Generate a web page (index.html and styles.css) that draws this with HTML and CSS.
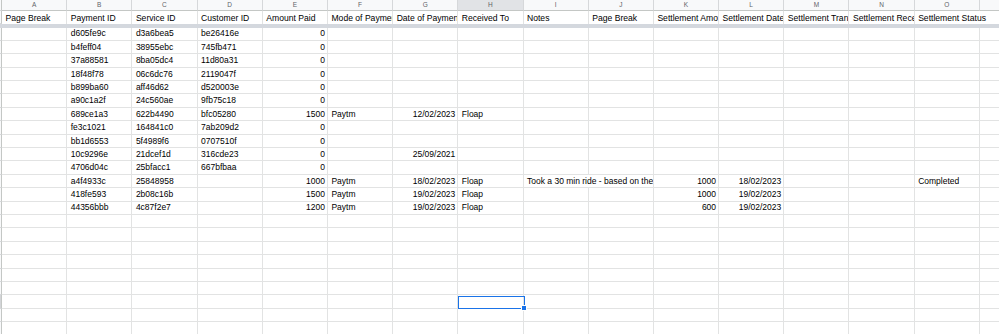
FILE: index.html
```html
<!DOCTYPE html>
<html>
<head>
<meta charset="utf-8">
<link rel="stylesheet" href="styles.css">
</head>
<body>
<div class="sheet">
  <div class="row letters">
    <div class="rh"></div><div>A</div><div>B</div><div>C</div><div>D</div><div>E</div><div>F</div><div>G</div><div class="sel">H</div><div>I</div><div>J</div><div>K</div><div>L</div><div>M</div><div>N</div><div>O</div><div></div>
  </div>
  <div class="row head">
    <div class="rh"></div><div>Page Break</div><div>Payment ID</div><div>Service ID</div><div>Customer ID</div><div>Amount Paid</div><div>Mode of Payment</div><div>Date of Payment</div><div>Received To</div><div>Notes</div><div>Page Break</div><div>Settlement Amount</div><div>Settlement Date</div><div>Settlement Transaction</div><div>Settlement Receipt</div><div class="span">Settlement Status</div>
  </div>
  <div class="freeze"></div>

  <div class="row"><div class="rh"></div><div></div><div>d605fe9c</div><div>d3a6bea5</div><div>be26416e</div><div class="r">0</div><div></div><div></div><div></div><div></div><div></div><div></div><div></div><div></div><div></div><div></div><div></div></div>
  <div class="row"><div class="rh"></div><div></div><div>b4feff04</div><div>38955ebc</div><div>745fb471</div><div class="r">0</div><div></div><div></div><div></div><div></div><div></div><div></div><div></div><div></div><div></div><div></div><div></div></div>
  <div class="row"><div class="rh"></div><div></div><div>37a88581</div><div>8ba05dc4</div><div>11d80a31</div><div class="r">0</div><div></div><div></div><div></div><div></div><div></div><div></div><div></div><div></div><div></div><div></div><div></div></div>
  <div class="row"><div class="rh"></div><div></div><div>18f48f78</div><div>06c6dc76</div><div>2119047f</div><div class="r">0</div><div></div><div></div><div></div><div></div><div></div><div></div><div></div><div></div><div></div><div></div><div></div></div>
  <div class="row"><div class="rh"></div><div></div><div>b899ba60</div><div>aff46d62</div><div>d520003e</div><div class="r">0</div><div></div><div></div><div></div><div></div><div></div><div></div><div></div><div></div><div></div><div></div><div></div></div>
  <div class="row"><div class="rh"></div><div></div><div>a90c1a2f</div><div>24c560ae</div><div>9fb75c18</div><div class="r">0</div><div></div><div></div><div></div><div></div><div></div><div></div><div></div><div></div><div></div><div></div><div></div></div>
  <div class="row"><div class="rh"></div><div></div><div>689ce1a3</div><div>622b4490</div><div>bfc05280</div><div class="r">1500</div><div>Paytm</div><div class="r">12/02/2023</div><div>Floap</div><div></div><div></div><div></div><div></div><div></div><div></div><div></div><div></div></div>
  <div class="row"><div class="rh"></div><div></div><div>fe3c1021</div><div>164841c0</div><div>7ab209d2</div><div class="r">0</div><div></div><div></div><div></div><div></div><div></div><div></div><div></div><div></div><div></div><div></div><div></div></div>
  <div class="row"><div class="rh"></div><div></div><div>bb1d6553</div><div>5f4989f6</div><div>0707510f</div><div class="r">0</div><div></div><div></div><div></div><div></div><div></div><div></div><div></div><div></div><div></div><div></div><div></div></div>
  <div class="row"><div class="rh"></div><div></div><div>10c9296e</div><div>21dcef1d</div><div>316cde23</div><div class="r">0</div><div></div><div class="r">25/09/2021</div><div></div><div></div><div></div><div></div><div></div><div></div><div></div><div></div><div></div></div>
  <div class="row"><div class="rh"></div><div></div><div>4706d04c</div><div>25bfacc1</div><div>667bfbaa</div><div class="r">0</div><div></div><div></div><div></div><div></div><div></div><div></div><div></div><div></div><div></div><div></div><div></div></div>
  <div class="row"><div class="rh"></div><div></div><div>a4f4933c</div><div>25848958</div><div></div><div class="r">1000</div><div>Paytm</div><div class="r">18/02/2023</div><div>Floap</div><div class="span">Took a 30 min ride - based on the distance</div><div class="r">1000</div><div class="r">18/02/2023</div><div></div><div></div><div>Completed</div><div></div></div>
  <div class="row"><div class="rh"></div><div></div><div>418fe593</div><div>2b08c16b</div><div></div><div class="r">1500</div><div>Paytm</div><div class="r">19/02/2023</div><div>Floap</div><div></div><div></div><div class="r">1000</div><div class="r">19/02/2023</div><div></div><div></div><div></div><div></div></div>
  <div class="row"><div class="rh"></div><div></div><div>44356bbb</div><div>4c87f2e7</div><div></div><div class="r">1200</div><div>Paytm</div><div class="r">19/02/2023</div><div>Floap</div><div></div><div></div><div class="r">600</div><div class="r">19/02/2023</div><div></div><div></div><div></div><div></div></div>
  <div class="row"><div class="rh"></div><div></div><div></div><div></div><div></div><div></div><div></div><div></div><div></div><div></div><div></div><div></div><div></div><div></div><div></div><div></div><div></div></div>
  <div class="row"><div class="rh"></div><div></div><div></div><div></div><div></div><div></div><div></div><div></div><div></div><div></div><div></div><div></div><div></div><div></div><div></div><div></div><div></div></div>
  <div class="row"><div class="rh"></div><div></div><div></div><div></div><div></div><div></div><div></div><div></div><div></div><div></div><div></div><div></div><div></div><div></div><div></div><div></div><div></div></div>
  <div class="row"><div class="rh"></div><div></div><div></div><div></div><div></div><div></div><div></div><div></div><div></div><div></div><div></div><div></div><div></div><div></div><div></div><div></div><div></div></div>
  <div class="row"><div class="rh"></div><div></div><div></div><div></div><div></div><div></div><div></div><div></div><div></div><div></div><div></div><div></div><div></div><div></div><div></div><div></div><div></div></div>
  <div class="row"><div class="rh"></div><div></div><div></div><div></div><div></div><div></div><div></div><div></div><div></div><div></div><div></div><div></div><div></div><div></div><div></div><div></div><div></div></div>
  <div class="row"><div class="rh sel"></div><div></div><div></div><div></div><div></div><div></div><div></div><div></div><div class="active"><span class="cursor"><span class="handle"></span></span></div><div></div><div></div><div></div><div></div><div></div><div></div><div></div><div></div></div>
  <div class="row"><div class="rh"></div><div></div><div></div><div></div><div></div><div></div><div></div><div></div><div></div><div></div><div></div><div></div><div></div><div></div><div></div><div></div><div></div></div>
  <div class="row"><div class="rh"></div><div></div><div></div><div></div><div></div><div></div><div></div><div></div><div></div><div></div><div></div><div></div><div></div><div></div><div></div><div></div><div></div></div>
</div>
</body>
</html>
```
FILE: styles.css
```css
html, body {
  margin: 0;
  padding: 0;
  background: #ffffff;
}
body {
  font-family: "Liberation Sans", Arial, sans-serif;
  overflow: hidden;
}
.sheet {
  width: 999px;
  height: 334px;
  overflow: hidden;
}
.row {
  display: grid;
  grid-template-columns: 2px repeat(16, 65.2px);
  height: 13.4px;
}
.row > div {
  box-sizing: border-box;
  border-right: 1px solid #e2e3e3;
  border-bottom: 1px solid #e2e3e3;
  overflow: hidden;
  white-space: nowrap;
  font-size: 8.5px;
  line-height: 10px;
  color: #000;
  padding: 0 2px 1.5px 3.5px;
  display: flex;
  align-items: flex-end;
  min-width: 0;
}
.row > .r {
  justify-content: flex-end;
}
.row > .span {
  grid-column: span 2;
}
.row > .rh {
  padding: 0;
  background: #f8f9fa;
  border-right: 1px solid #c4c7c5;
  border-bottom: 1px solid #d6d8da;
}
.row > .rh.sel {
  background: #d3d5d8;
}
.letters {
  height: 11px;
  background: #f8f9fa;
}
.letters > div {
  font-size: 6.5px;
  line-height: 8px;
  color: #5f6368;
  justify-content: center;
  align-items: center;
  padding: 0;
  border-right: 1px solid #d6d8da;
  border-bottom: 1px solid #c4c7c5;
}
.letters > .sel {
  background: #e1e3e6;
}
.head {
  height: 13px;
}
.head > div {
  border-bottom: none;
  font-size: 8.6px;
  padding-bottom: 1px;
}
.freeze {
  height: 3.5px;
  background: #d4d8de;
}
.row > .active {
  position: relative;
  overflow: visible;
}
.cursor {
  position: absolute;
  left: 0;
  top: 1px;
  right: -2px;
  bottom: -1px;
  border: 1.5px solid #1a73e8;
  box-sizing: border-box;
}
.handle {
  position: absolute;
  right: -3px;
  bottom: -3px;
  width: 4px;
  height: 4px;
  background: #1a73e8;
  border: 1px solid #ffffff;
}
```
